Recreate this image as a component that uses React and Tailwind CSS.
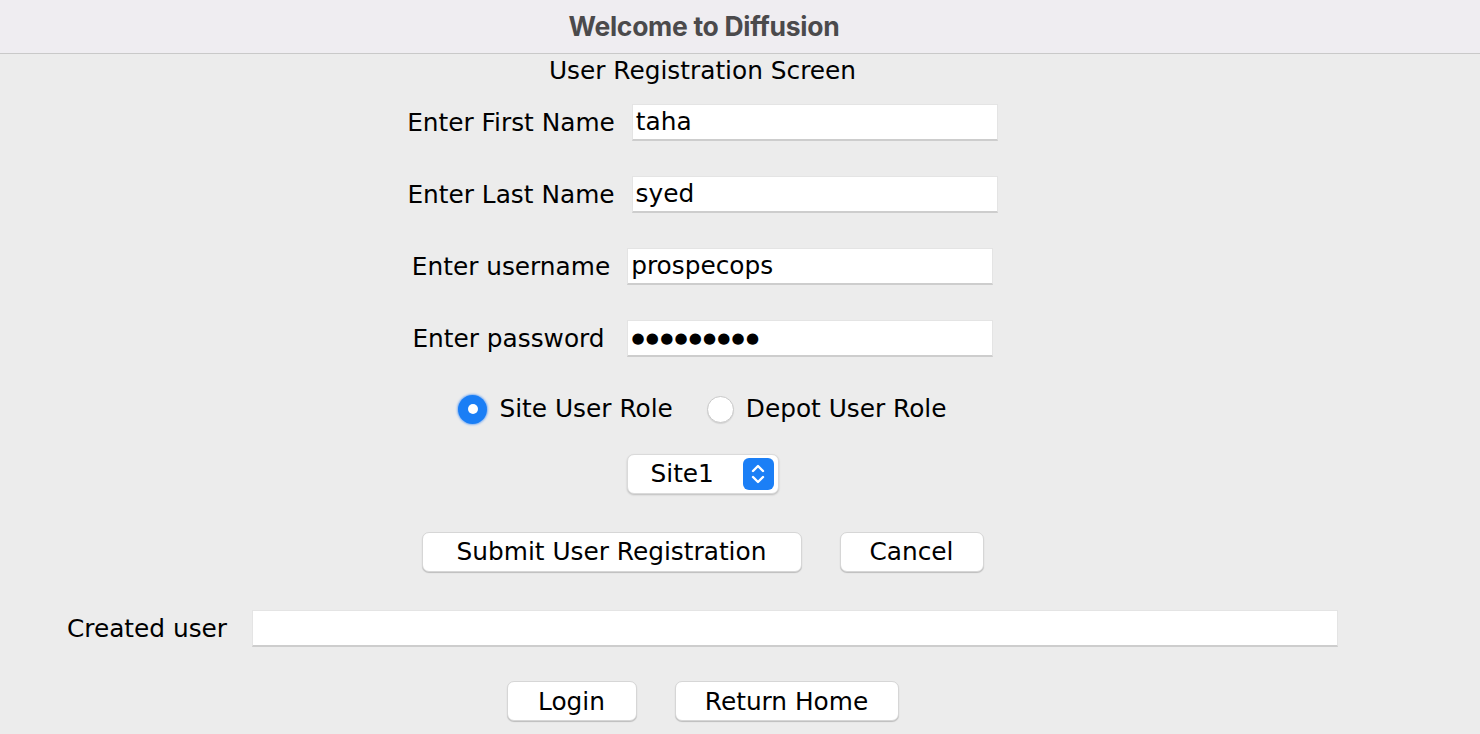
/**
 * App — Diffusion user registration window (Swing aqua look).
 */
function Field({ value, width = "w-[366px]", dots }) {
  return (
    <div
      className={`${width} h-[37px] bg-white border border-[#e4e4e4] border-b-2 border-b-[#cdcdcd] flex items-center text-black ${dots ? "px-[4px] text-[15px] tracking-[1.2px]" : "px-[3px]"}`}
    >
      {value}
    </div>
  );
}

function Row({ label, children, gap = "gap-[17px]" }) {
  return (
    <div className={`flex items-center justify-center ${gap} h-[37px]`}>
      <span>{label}</span>
      {children}
    </div>
  );
}

function Button({ children, width }) {
  return (
    <button
      className={`${width} h-[40px] bg-white rounded-[7px] border border-[#d6d6d6] shadow-[0_1px_1px_rgba(0,0,0,0.2)] flex items-center justify-center text-black`}
    >
      {children}
    </button>
  );
}

function Radio({ checked, label }) {
  return (
    <div className="flex items-center gap-[12px]">
      {checked ? (
        <span className="w-[29px] h-[29px] rounded-full bg-[#1a7ef5] shadow-[0_0_2px_1px_rgba(60,140,250,0.6)] flex items-center justify-center">
          <span className="w-[10px] h-[10px] rounded-full bg-white" />
        </span>
      ) : (
        <span className="w-[27px] h-[27px] rounded-full bg-white border border-[#c9c9c9] shadow-[0_1px_1px_rgba(0,0,0,0.1)]" />
      )}
      <span>{label}</span>
    </div>
  );
}

export default function App() {
  return (
    <div className="min-h-screen bg-[#ececec] text-black text-[24.8px] font-['DejaVu_Sans',sans-serif]">
      <div className="h-[54px] bg-[#efedf1] border-b border-[#c9c9c9]">
        <div className="w-[1408px] h-full flex items-center justify-center font-['Inter',sans-serif] font-bold text-[26.5px] tracking-[-0.3px] text-[#4b4a4c]">
          Welcome to Diffusion
        </div>
      </div>

      <div className="w-[1405px] flex flex-col items-center">
        <div className="mt-[4px] h-[26px] leading-[26px]">User Registration Screen</div>

        <div className="mt-[20px] flex flex-col gap-[35px]">
          <Row label="Enter First Name">
            <Field value="taha" />
          </Row>
          <Row label="Enter Last Name">
            <Field value="syed" />
          </Row>
          <Row label="Enter username">
            <Field value="prospecops" />
          </Row>
          <Row label="Enter password" gap="gap-[22px]">
            <Field value="●●●●●●●●●" dots />
          </Row>
        </div>

        <div className="mt-[37px] h-[30px] flex items-center gap-[34px]">
          <Radio checked label="Site User Role" />
          <Radio label="Depot User Role" />
        </div>

        <div className="mt-[30px] w-[152px] h-[40px] bg-white rounded-[7px] border border-[#dadada] shadow-[0_1px_2px_rgba(0,0,0,0.2)] flex items-center pl-[23px] pr-[4px] justify-between">
          <span>Site1</span>
          <span className="w-[31px] h-[32px] rounded-[6px] bg-[#1b7ff6] flex items-center justify-center">
            <svg width="16" height="24" viewBox="0 0 16 24" fill="none" stroke="white" strokeWidth="2.4" strokeLinecap="round" strokeLinejoin="round">
              <path d="M3 9 L8 4 L13 9" />
              <path d="M3 15 L8 20 L13 15" />
            </svg>
          </span>
        </div>

        <div className="mt-[38px] flex gap-[38px]">
          <Button width="w-[380px]">Submit User Registration</Button>
          <Button width="w-[144px]">Cancel</Button>
        </div>

        <div className="mt-[38px] flex items-center gap-[25px]">
          <span>Created user</span>
          <Field value="" width="w-[1086px]" />
        </div>

        <div className="mt-[34px] flex gap-[38px]">
          <Button width="w-[130px]">Login</Button>
          <Button width="w-[224px]">Return Home</Button>
        </div>
      </div>
    </div>
  );
}
